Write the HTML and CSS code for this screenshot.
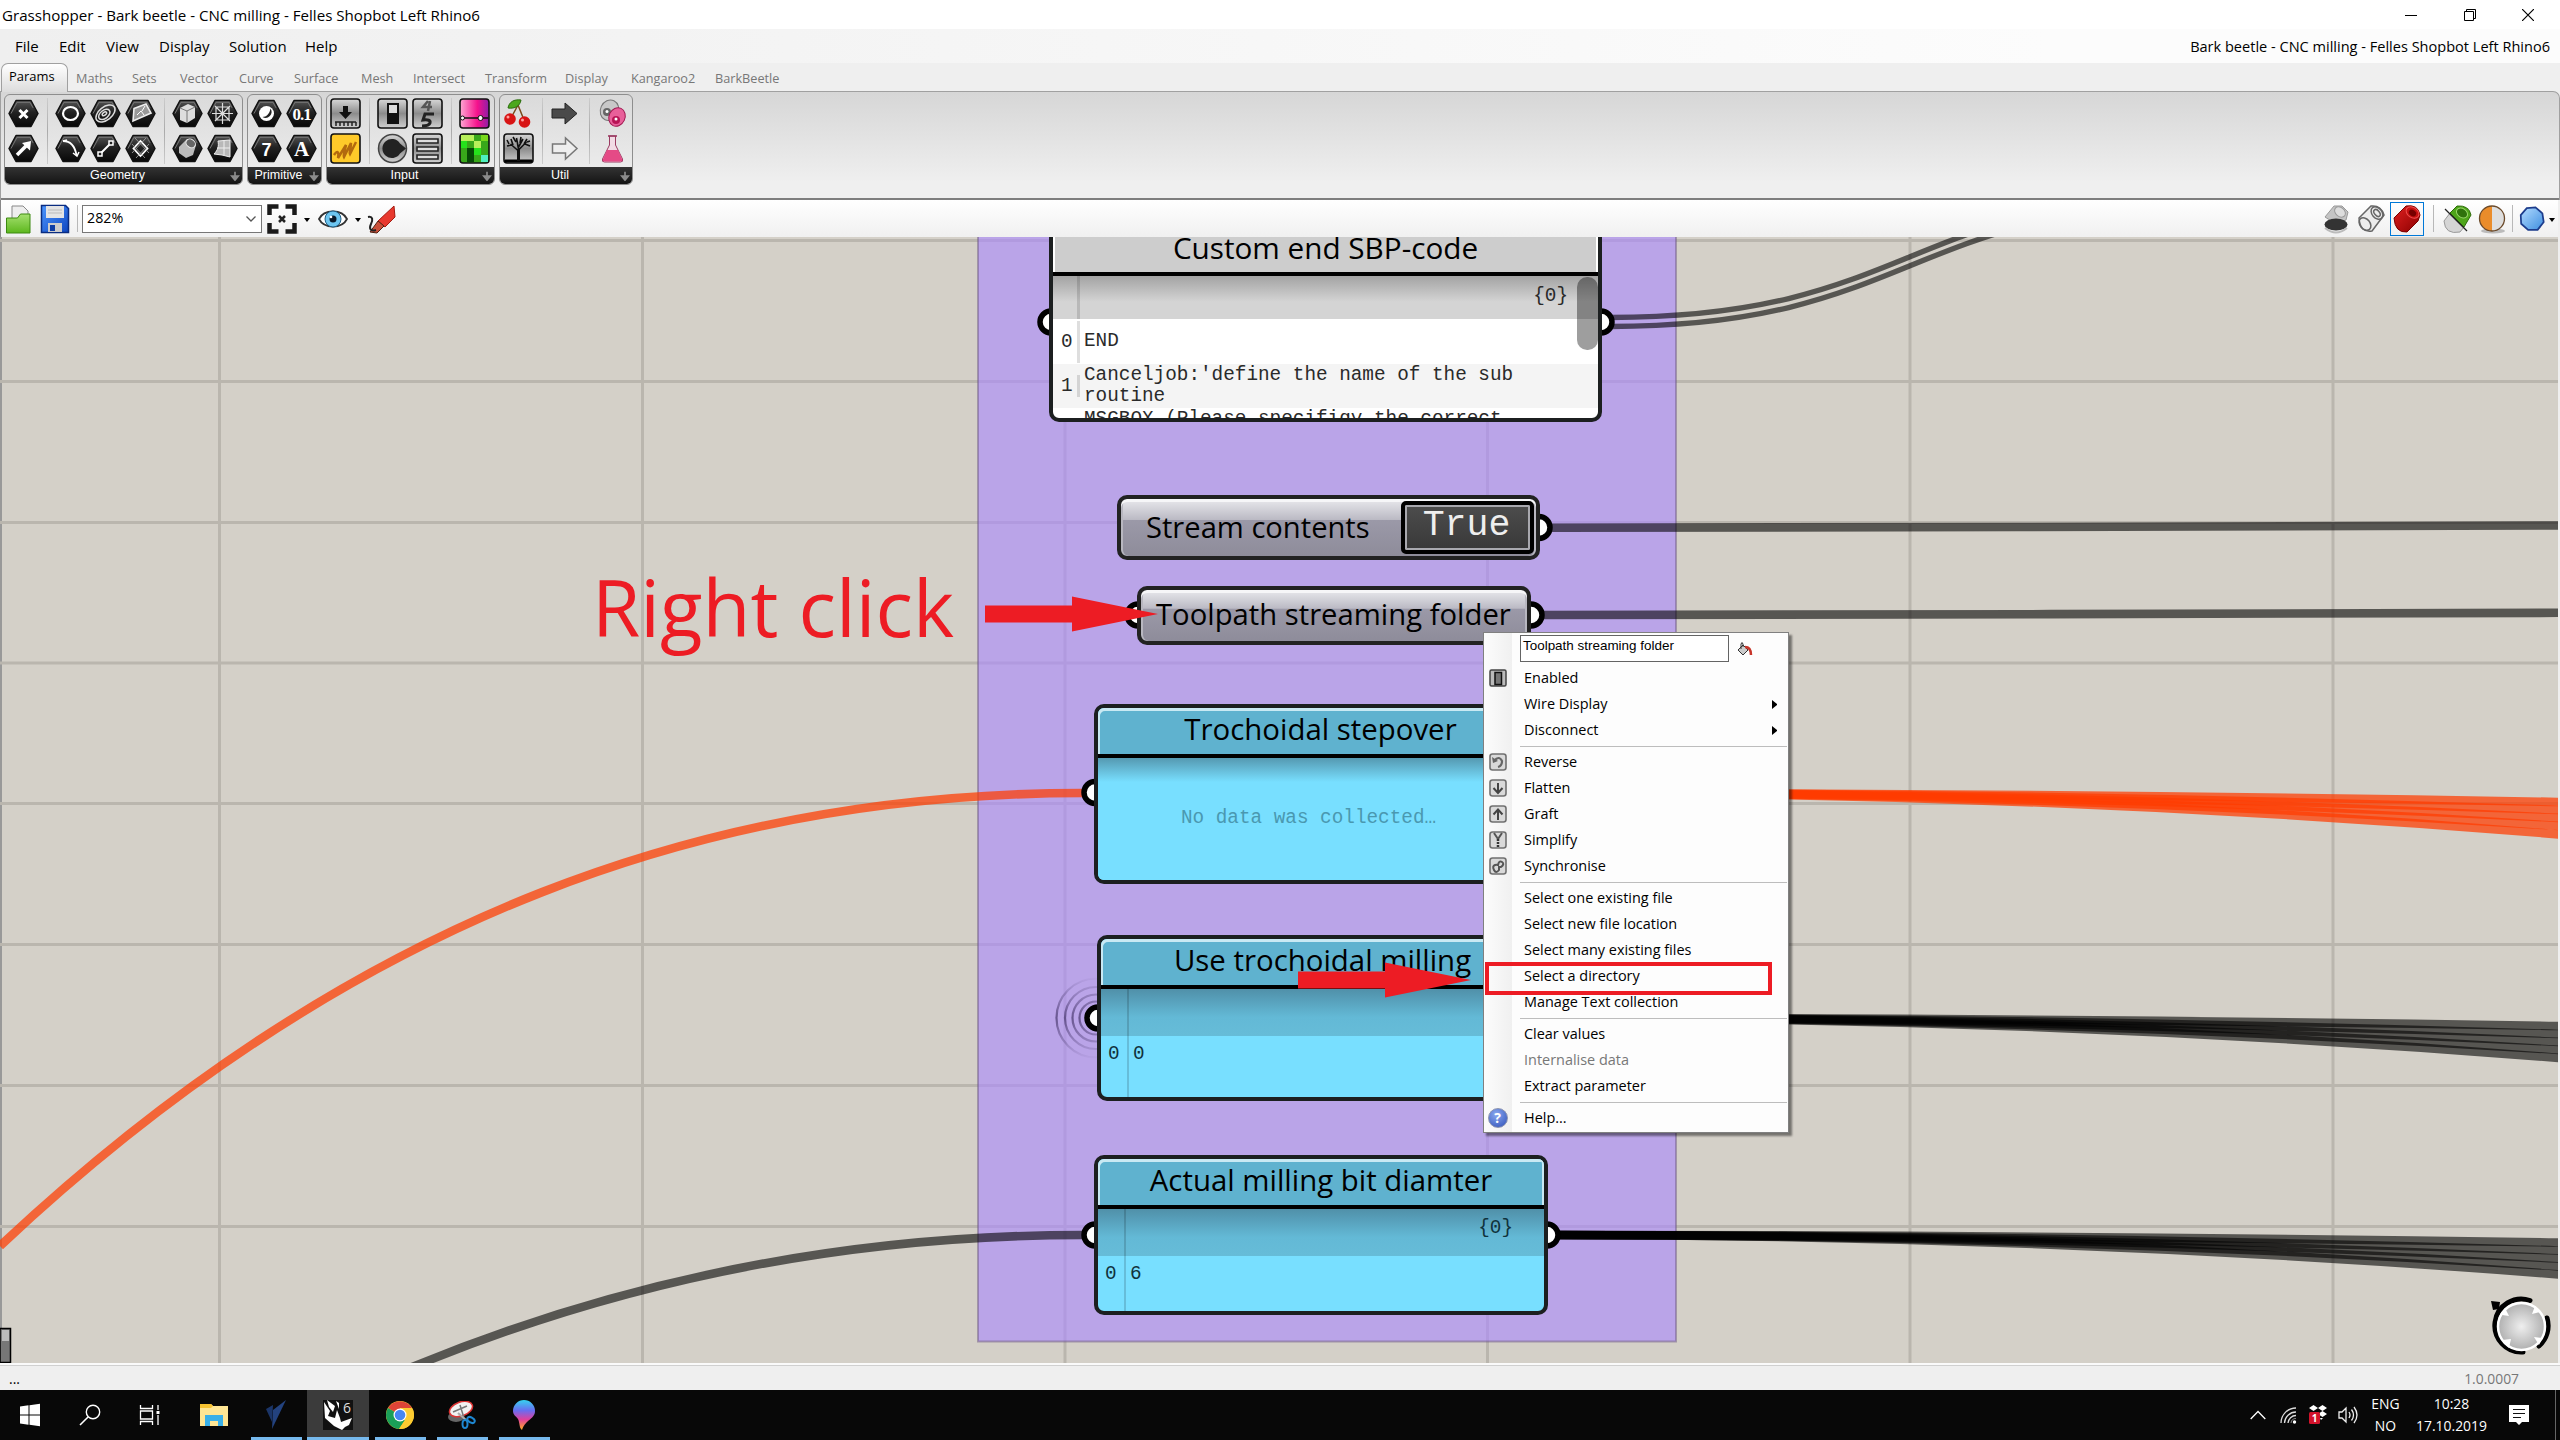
FILE: index.html
```html
<!DOCTYPE html>
<html lang="en">
<head>
<meta charset="utf-8">
<title>Grasshopper - Bark beetle - CNC milling</title>
<link rel="stylesheet" href="styles.css">
</head>
<body>
<svg class="defs" width="0" height="0" aria-hidden="true">
  <defs>
    <linearGradient id="gDark" x1="0" y1="0" x2="0" y2="1"><stop offset="0" stop-color="#555"/><stop offset=".45" stop-color="#222"/><stop offset="1" stop-color="#080808"/></linearGradient>
    <linearGradient id="gGrey" x1="0" y1="0" x2="0" y2="1"><stop offset="0" stop-color="#d8d8d8"/><stop offset=".5" stop-color="#8c8c8c"/><stop offset="1" stop-color="#d0d0d0"/></linearGradient>
    <linearGradient id="gPink" x1="0" y1="0" x2="1" y2="0"><stop offset="0" stop-color="#ffa9d4"/><stop offset=".6" stop-color="#f5128c"/><stop offset="1" stop-color="#8d1ea8"/></linearGradient>
    <linearGradient id="gBlue" x1="0" y1="0" x2="1" y2="1"><stop offset="0" stop-color="#4d97ff"/><stop offset="1" stop-color="#0d45c0"/></linearGradient>
    <linearGradient id="gGreen" x1="0" y1="0" x2="0" y2="1"><stop offset="0" stop-color="#a5e070"/><stop offset="1" stop-color="#5db71d"/></linearGradient>
    <linearGradient id="gRed" x1="0" y1="0" x2="1" y2="1"><stop offset="0" stop-color="#e02020"/><stop offset="1" stop-color="#8a0000"/></linearGradient>
    <linearGradient id="gSky" x1="0" y1="0" x2="1" y2="1"><stop offset="0" stop-color="#b5dcff"/><stop offset="1" stop-color="#3d8ee0"/></linearGradient>
    <linearGradient id="gPaint" x1="0" y1="0" x2="0" y2="1"><stop offset="0" stop-color="#35d3f0"/><stop offset=".35" stop-color="#6a6cf0"/><stop offset=".65" stop-color="#e0409c"/><stop offset="1" stop-color="#ffb020"/></linearGradient>
    <linearGradient id="gRipple" gradientUnits="userSpaceOnUse" x1="0" y1="976" x2="0" y2="1060"><stop offset="0" stop-color="#3c2c60" stop-opacity="0"/><stop offset=".5" stop-color="#3c2c60" stop-opacity=".65"/><stop offset="1" stop-color="#3c2c60" stop-opacity="0"/></linearGradient>
    <radialGradient id="gBall"><stop offset="0" stop-color="#efefef"/><stop offset="1" stop-color="#b0b0b0"/></radialGradient>
    <symbol id="hex" viewBox="0 0 31 31"><polygon points="1,15.5 8,2.5 23,2.5 30,15.5 23,28.5 8,28.5" fill="url(#gDark)" stroke="#111" stroke-width="1.5" stroke-linejoin="round"/><path d="M3 15.5 9 4.300h13l3 5.500" fill="none" stroke="#777" stroke-width="1"/></symbol>
    <symbol id="sq" viewBox="0 0 31 31"><rect x="1" y="1" width="29" height="29" rx="3" fill="url(#gGrey)" stroke="#111" stroke-width="1.6"/></symbol>
    <symbol id="mini" viewBox="0 0 18 18"><rect x="1" y="1" width="16" height="16" rx="2.500" fill="#d9d9d9" stroke="#707070" stroke-width="1.600"/></symbol>
    <symbol id="down" viewBox="0 0 10 12"><path d="M5 1v6M1 6l4 5 4-5z" stroke="#8c8c8c" stroke-width="2" fill="#8c8c8c"/></symbol>
  </defs>
</svg>

<header class="titlebar">
  <span class="title">Grasshopper - Bark beetle - CNC milling - Felles Shopbot Left Rhino6</span>
  <div class="winbtns">
    <svg viewBox="0 0 12 12" width="12" height="12"><path d="M0 6.500h12" stroke="#000"/></svg>
    <svg viewBox="0 0 12 12" width="12" height="12"><path d="M.5 2.500h9v9h-9zM2.500 2.500v-2h9v9h-2" stroke="#000" fill="none"/></svg>
    <svg viewBox="0 0 12 12" width="12" height="12"><path d="M0 0l12 12M12 0 0 12" stroke="#000" stroke-width="1.200"/></svg>
  </div>
</header>

<nav class="menubar">
  <div class="menus"><span>File</span><span>Edit</span><span>View</span><span>Display</span><span>Solution</span><span>Help</span></div>
  <span class="docname">Bark beetle - CNC milling - Felles Shopbot Left Rhino6</span>
</nav>

<div class="tabs">
  <span class="tab-active">Params</span>
  <div class="tablist"><span>Maths</span><span>Sets</span><span>Vector</span><span>Curve</span><span>Surface</span><span>Mesh</span><span>Intersect</span><span>Transform</span><span>Display</span><span>Kangaroo2</span><span>BarkBeetle</span></div>
</div>

<section class="ribbon">
  <div class="group">
    <div class="icons">
      <div class="cells c1">
        <svg viewBox="0 0 31 31"><use href="#hex"/><path d="M11.500 12l8 8M19.500 12l-8 8" stroke="#fff" stroke-width="3"/></svg>
        <svg viewBox="0 0 31 31"><use href="#hex"/><path d="M9 22l9-9" stroke="#fff" stroke-width="3.500"/><path d="M14 10l9-2-1 9.500z" fill="#fff"/></svg>
      </div><i class="sep"></i>
      <div class="cells c3">
        <svg viewBox="0 0 31 31"><use href="#hex"/><ellipse cx="15.500" cy="15.500" rx="7.500" ry="6.500" fill="none" stroke="#fff" stroke-width="2.200"/></svg>
        <svg viewBox="0 0 31 31"><use href="#hex"/><g fill="none" stroke="#ddd" stroke-width="1.500" transform="rotate(-38 15.500 15.500)"><ellipse cx="15.500" cy="15.500" rx="11" ry="6.500"/><ellipse cx="14" cy="15.500" rx="6.500" ry="4"/><ellipse cx="14.500" cy="15" rx="2.500" ry="1.500"/></g></svg>
        <svg viewBox="0 0 31 31"><use href="#hex"/><path d="M9 10.500l12-4.500 5 9-18 8z" fill="#999" stroke="#eee" stroke-width="1.600"/><path d="M12 17l4-4 3 4M20 8l-3 5" stroke="#fff" fill="none"/></svg>
        <svg viewBox="0 0 31 31"><use href="#hex"/><path d="M8 8c8 0 12 6 13.500 14" stroke="#fff" stroke-width="1.800" fill="none"/><path d="M8 8l4-1M18 20l4 3 2-4" stroke="#fff" stroke-width="1.500" fill="none"/></svg>
        <svg viewBox="0 0 31 31"><use href="#hex"/><path d="M10.500 20.500l10-10" stroke="#fff" stroke-width="2"/><path d="M8 19h4v4h-4zM19 8h4v4h-4z" fill="#222" stroke="#fff" stroke-width="1.500"/></svg>
        <svg viewBox="0 0 31 31"><use href="#hex"/><path d="M15.500 8l7 7.500-7 7.500L8.500 15.500z" fill="none" stroke="#fff" stroke-width="1.800"/><path d="M10 5l14 15M21 5 7 20M7 11l13 14M24 11 11 25" stroke="#aaa" stroke-width=".8"/></svg>
      </div><i class="sep"></i>
      <div class="cells c2">
        <svg viewBox="0 0 31 31"><use href="#hex"/><path d="M8 10l8-4 7 3v11l-8 5-7-3z" fill="#ddd"/><path d="M8 10l7 3v12M15 13l8-4" stroke="#777" fill="none"/></svg>
        <svg viewBox="0 0 31 31"><use href="#hex"/><g stroke="#ddd" stroke-width="1.200" fill="none"><path d="M9 9h13v13h-13zM15.500 5v21M5 15.500h21M8 8l15 15M23 8 8 23"/></g></svg>
        <svg viewBox="0 0 31 31"><use href="#hex"/><path d="M7 14l8-8 9 6-3 10-7 3-7-5z" fill="#bbb"/><ellipse cx="19" cy="10.500" rx="5" ry="4" transform="rotate(35 19 10)" fill="#666" stroke="#eee"/></svg>
        <svg viewBox="0 0 31 31"><use href="#hex"/><path d="M11 8l12-1v17l-8-2-8-1c4-4 5-8 4-13z" fill="#b8b8b8" stroke="#eee"/><path d="M17 8v14M10 15h13" stroke="#eee"/></svg>
      </div>
    </div>
    <div class="glabel"><span>Geometry</span><svg width="10" height="12"><use href="#down"/></svg></div>
  </div>
  <div class="group">
    <div class="icons"><div class="cells c2">
      <svg viewBox="0 0 31 31"><use href="#hex"/><circle cx="15.500" cy="15.500" r="7.500" fill="#fff"/><path d="M19.500 10.500a6 6 0 0 1-8 8.500c4 0 7-3 8-8.500z" fill="#222"/></svg>
      <svg viewBox="0 0 31 31"><use href="#hex"/><text x="15.500" y="22" class="glyph g01">0.1</text></svg>
      <svg viewBox="0 0 31 31"><use href="#hex"/><text x="15.500" y="23" class="glyph g7">7</text></svg>
      <svg viewBox="0 0 31 31"><use href="#hex"/><text x="15.500" y="23" class="glyph gA">A</text></svg>
    </div></div>
    <div class="glabel"><span>Primitive</span><svg width="10" height="12"><use href="#down"/></svg></div>
  </div>
  <div class="group">
    <div class="icons">
      <div class="cells c1">
        <svg viewBox="0 0 31 31"><use href="#sq"/><path d="M13 8h5v6h4l-6.500 7-6.500-7h4z" fill="#111"/><path d="M5 24h21M6 24v4M10 24v4M14 24v4M18 24v4M22 24v4M26 24v4" stroke="#222" stroke-width="1.500"/></svg>
        <svg viewBox="0 0 31 31"><rect x="1" y="1" width="29" height="29" rx="3" fill="#ffca2a" stroke="#111" stroke-width="1.600"/><path d="M4 22c4-6 5-2 4 3l8-13c-1 5-3 10-2 12l7-14c0 5-2 9-1 11l6-12" fill="none" stroke="#b36a0e" stroke-width="2.500"/></svg>
      </div><i class="sep"></i>
      <div class="cells c2">
        <svg viewBox="0 0 31 31"><use href="#sq"/><rect x="10" y="5" width="12" height="21" fill="#111"/><rect x="12" y="7" width="8" height="8" fill="#ddd"/></svg>
        <svg viewBox="0 0 31 31"><use href="#sq"/><path d="M16 3l-5 6h9M18 3l-2 10" fill="none" stroke="#555" stroke-width="2.500"/><path d="M22 16h-9l-2 6q8-1 7 3-1 3-8 3" fill="none" stroke="#222" stroke-width="3"/></svg>
        <svg viewBox="0 0 31 31"><circle cx="15.500" cy="15.500" r="14" fill="url(#gGrey)" stroke="#444" stroke-width="1.500"/><path d="M29 15.500l-6 5a9.500 9.500 0 1 1 0-10z" fill="#222"/></svg>
        <svg viewBox="0 0 31 31"><use href="#sq"/><path d="M5 6h21v4h-21zM5 14h21v4h-21zM5 22h21v4h-21z" fill="#ddd" stroke="#222" stroke-width="1.600"/></svg>
      </div><i class="sep"></i>
      <div class="cells c1">
        <svg viewBox="0 0 31 31"><rect x="1" y="1" width="29" height="29" rx="3" fill="url(#gPink)" stroke="#111" stroke-width="1.600"/><path d="M2 20h27" stroke="#111" stroke-width="1.500"/><circle cx="3.500" cy="20" r="2" fill="#fff" stroke="#111"/><circle cx="21.500" cy="20" r="2.500" fill="#fff" stroke="#111"/></svg>
        <svg viewBox="0 0 31 31"><rect x="1" y="1" width="29" height="29" rx="3" fill="#38a81a" stroke="#111" stroke-width="1.600"/><path d="M2 2h6v6h-6zM15 8h7v7h-7zM8 2h7v6h-7z" fill="#b7f05a"/><path d="M8 15h7v7h-7zM8 22h7v7h-7z" fill="#064b05"/><path d="M15 15h7v7h-7zM2 8h6v7h-6z" fill="#25e21b"/><path d="M22 22h7v7h-7z" fill="#4ff0c0"/><path d="M22 2h7v6h-7z" fill="#78d81c"/></svg>
      </div>
    </div>
    <div class="glabel"><span>Input</span><svg width="10" height="12"><use href="#down"/></svg></div>
  </div>
  <div class="group">
    <div class="icons">
      <div class="cells c1">
        <svg viewBox="0 0 31 31"><path d="M15 7l-7 13M15 7l6 15" stroke="#7a4a1a" stroke-width="1.500" fill="none"/><path d="M5 10c1-6 6-9 13-8-1 6-6 9-13 8z" fill="#4ca81d" stroke="#2b6d0e"/><circle cx="7" cy="21" r="5.800" fill="#d81414"/><circle cx="21.500" cy="24" r="5.800" fill="#d81414"/><circle cx="5" cy="19" r="1.500" fill="#ff9d9d"/><circle cx="19.500" cy="22" r="1.500" fill="#ff9d9d"/></svg>
        <svg viewBox="0 0 31 31"><use href="#sq"/><path d="M2 27h27v2h-27z" fill="#000" stroke="#000"/><path d="M15.500 28v-12" stroke="#111" stroke-width="3"/><path d="M15.500 18l-8-7M15.500 17l8-8M15.500 16l-2-11M15 15l5-9M9 12l-5 1M22 11l5 2M10 12l-2-6M21 11l3-5M13 9l-3-5M17 10l1-6M6 11l-2-4M24 9l3-1" stroke="#111" stroke-width="1.600"/></svg>
      </div><i class="sep"></i>
      <div class="cells c1">
        <svg viewBox="0 0 31 31"><path d="M2 11h13v-6l12 10.500-12 10.500v-6h-13z" fill="#4a4a4a" stroke="#222"/></svg>
        <svg viewBox="0 0 31 31"><path d="M2.500 11h13v-6l11.500 10.500-11.500 10.500v-6h-13z" fill="#eee" stroke="#777" stroke-width="1.500"/></svg>
      </div><i class="sep"></i>
      <div class="cells c1">
        <svg viewBox="0 0 31 31"><ellipse cx="12.500" cy="12" rx="9" ry="10.500" transform="rotate(25 12 12)" fill="#c8c8c8" stroke="#777"/><circle cx="10" cy="14" r="4" fill="#666"/><ellipse cx="20" cy="19" rx="8" ry="9.500" transform="rotate(25 20 19)" fill="#e8609a" stroke="#a01850"/><circle cx="19" cy="22" r="4" fill="#b81456"/><circle cx="10" cy="13.500" r="1.500" fill="#fff"/><circle cx="19" cy="21" r="1.500" fill="#fff"/></svg>
        <svg viewBox="0 0 31 31"><path d="M12.500 3v9l-7 14q-1 3 2 3h16q3 0 2-3l-7-14v-9z" fill="#f1dbe4" stroke="#9a3b62"/><path d="M10 17h11l4 9q1 2.500-1.500 2.500h-16q-2.500 0-1.500-2.500z" fill="#e54a86"/><path d="M11 3h9" stroke="#9a3b62" stroke-width="1.600"/></svg>
      </div>
    </div>
    <div class="glabel"><span>Util</span><svg width="10" height="12"><use href="#down"/></svg></div>
  </div>
</section>

<div class="toolbar">
  <svg class="t-open" viewBox="0 0 28 30" width="28" height="30"><path d="M7 2h11l5 5v12h-16z" fill="#eee" stroke="#888"/><path d="M1.500 14h11l3-4h9.500v19h-23.500z" fill="url(#gGreen)" stroke="#3c8a10"/></svg>
  <svg class="t-save" viewBox="0 0 30 30" width="30" height="30"><path d="M1.500 1.500h24l3 3v24h-27z" fill="url(#gBlue)" stroke="#0a2c80" stroke-width="1.500"/><path d="M6 2h18v12h-18z" fill="#e4e4e4"/><path d="M8 6h14M8 9h14" stroke="#bbb"/><path d="M8 19h14v9h-14z" fill="#ccc"/><path d="M10 21h5v6h-5z" fill="#0d3ca5"/></svg>
  <i class="tsep"></i>
  <div class="combo"><span>282%</span><svg viewBox="0 0 12 8" width="12" height="8"><path d="M1.500 1.500 6 6l4.500-4.500" fill="none" stroke="#555" stroke-width="1.300"/></svg></div>
  <svg class="t-frame" viewBox="0 0 30 30" width="30" height="30"><path d="M2.500 11v-8.500h9M18.500 2.500h9v8.500M27.500 19v8.500h-9M11.500 27.500h-9v-8.500" fill="none" stroke="#1a1a1a" stroke-width="4.500"/><path d="M12 12l6 6M18 12l-6 6" stroke="#222" stroke-width="2.500"/></svg>
  <i class="caret"></i>
  <svg class="t-eye" viewBox="0 0 30 30" width="30" height="30"><path d="M1 15c5-10 23-10 28 0-5 10-23 10-28 0z" fill="#fff" stroke="#333" stroke-width="1.800"/><circle cx="15" cy="15" r="8" fill="#6cc5f0" stroke="#1f5e85"/><circle cx="15" cy="15" r="3.500" fill="#0a1a2a"/><circle cx="13" cy="13" r="1.300" fill="#fff"/></svg>
  <i class="caret"></i>
  <svg class="t-brush" viewBox="0 0 30 30" width="30" height="30"><path d="M28 2l1 11-10 10-7-6z" fill="#e8392e" stroke="#a31b10"/><path d="M12 17l6 5-7 7-7-1z" fill="#c9503a" stroke="#502010"/><path d="M2 13c5-1 5 3 3 7s-1 8 5 6" stroke="#222" stroke-width="2" fill="none"/></svg>
  <div class="tright">
    <svg viewBox="0 0 30 30" width="30" height="30"><path d="M4 13 13 2h8l6 6-2 8-10 4z" fill="#c4c4c4" stroke="#999"/><ellipse cx="19" cy="8" rx="6" ry="4.500" transform="rotate(40 19 8)" fill="#ddd" stroke="#999"/><ellipse cx="15" cy="20.500" rx="11.500" ry="6" fill="#333"/><path d="M4 24q11 9 22 0" stroke="#bbb" fill="none" stroke-width="2"/></svg>
    <svg viewBox="0 0 30 30" width="30" height="30"><g fill="none" stroke="#666" stroke-width="1.500"><path d="M3 14 15 2q10-1 13 9L16 27q-12 2-13-13z" fill="#ececec"/><ellipse cx="21" cy="9" rx="7" ry="5" transform="rotate(50 21 9)"/><ellipse cx="21" cy="9" rx="4" ry="2.500" transform="rotate(50 21 9)"/><ellipse cx="9" cy="20" rx="7" ry="5" transform="rotate(50 9 20)"/></g></svg>
    <span class="selected"><svg viewBox="0 0 30 30" width="30" height="30"><path d="M2 14 14 2q12-2 14 9l-2 6-11 11q-12 1-13-14z" fill="url(#gRed)" stroke="#7a0000"/><ellipse cx="20.500" cy="8.500" rx="7" ry="5" transform="rotate(35 20.500 8.500)" fill="#c61010" stroke="#f05050"/><ellipse cx="20.500" cy="9" rx="4" ry="3" transform="rotate(35 20.500 9)" fill="#700"/></svg></span>
    <i class="tsep"></i>
    <svg viewBox="0 0 30 30" width="30" height="30"><path d="M2 17l6-8 14 14-4 5q-15 3-16-11z" fill="#d5d5d5" stroke="#999"/><path d="M8 9l7-7q12-1 14 9l-7 12z" fill="#4ea51a" stroke="#2c6a08"/><ellipse cx="20" cy="9" rx="6" ry="4.500" transform="rotate(35 20 9)" fill="#2f720c" stroke="#9bd96a"/><path d="M3 5l22 22" stroke="#222" stroke-width="1.300"/></svg>
    <svg viewBox="0 0 30 30" width="30" height="30"><ellipse cx="16" cy="27" rx="12" ry="2.500" fill="#bbb"/><path d="M15 2a12.500 12.500 0 0 0 0 25z" fill="#ea8c2a"/><path d="M15 2a12.500 12.500 0 0 1 0 25z" fill="#dedede"/><circle cx="15" cy="14.500" r="12.500" fill="none" stroke="#6b4a2a" stroke-width="1.300"/></svg>
    <i class="tsep"></i>
    <svg viewBox="0 0 30 30" width="26" height="28"><path d="M9 2.500l10-1 8 7 1.500 10-7 9h-11l-8-7-.5-10z" fill="url(#gSky)" stroke="#1c3c8c" stroke-width="2"/></svg>
    <i class="caret"></i>
  </div>
</div>

<main class="canvas">
  <svg class="wires" viewBox="0 237 2558 1126" width="2558" height="1126">
    <g class="grid">
      <path d="M219.500 237V1363M642.500 237V1363M1065 237V1363M1487.500 237V1363M1910 237V1363M2333 237V1363"/>
      <path d="M0 240.500H2558M0 381.500H2558M0 522.500H2558M0 663H2558M0 803.500H2558M0 944.500H2558M0 1085.500H2558M0 1226.500H2558"/>
    </g>
    <rect x="978" y="100" width="698" height="1241.500" class="groupbox"/>
    <g class="wire thin"><path d="M1610 317.500C1912 317.500 1908 196 2210 196"/><path d="M1610 326.500C1912 326.500 1908 205 2210 205"/></g>
    <g class="wire">
      <path d="M1548 527.700C1900 528 2200 526 2560 525.500"/>
      <path d="M1540 615C1900 615 2200 613.500 2560 612.800"/>
      <path d="M1083 1235C842 1235 602 1281 361 1389"/>
      <path d="M1560 1018Q2060 1018 2560 1026"/><path d="M1560 1018Q2060 1018 2560 1034"/><path d="M1560 1018Q2060 1018 2560 1042"/><path d="M1560 1018Q2060 1018 2560 1050"/><path d="M1560 1018Q2060 1018 2560 1058"/>
      <path d="M1555 1235Q2057 1235 2560 1242.500"/><path d="M1555 1235Q2057 1235 2560 1250.500"/><path d="M1555 1235Q2057 1235 2560 1258.500"/><path d="M1555 1235Q2057 1235 2560 1266.500"/><path d="M1555 1235Q2057 1235 2560 1274.500"/>
    </g>
    <g class="wire hot">
      <path d="M1083 793C722 793 361 907 0 1246"/>
      <path d="M1560 793Q2060 793 2560 802"/><path d="M1560 793Q2060 793 2560 810"/><path d="M1560 793Q2060 793 2560 818"/><path d="M1560 793Q2060 793 2560 826"/><path d="M1560 793Q2060 793 2560 834.500"/>
    </g>
    <g class="ripple">
      <circle cx="1096" cy="1018" r="39.500"/><circle cx="1096" cy="1018" r="31"/><circle cx="1096" cy="1018" r="23.500"/><circle cx="1096" cy="1018" r="16.500"/>
    </g>
    <g class="grips">
      <circle cx="1051" cy="322" r="11"/><circle cx="1601" cy="322" r="11"/><circle cx="1539" cy="527.500" r="11"/>
      <circle cx="1138" cy="615" r="11"/><circle cx="1531" cy="615" r="11"/><circle cx="1095" cy="792.500" r="11"/>
      <circle cx="1098" cy="1018" r="11"/><circle cx="1095" cy="1235" r="11"/><circle cx="1547" cy="1235" r="11"/>
    </g>
    <g>
      <rect x="0" y="1328.500" width="10.500" height="34" fill="#777" stroke="#000" stroke-width="1.500"/><rect x="2" y="1330" width="7" height="11" fill="#bbb"/>
    </g>
    <g>
      <path d="M2530 1300.500A26.500 26.500 0 1 0 2523 1352M2547 1318A27 27 0 0 1 2539 1346" fill="none" stroke="#000" stroke-width="5" stroke-linecap="round"/>
      <path d="M2491 1301l9 1-1 7-6 1z" fill="#000"/>
      <circle cx="2521.500" cy="1326.500" r="23.500" fill="url(#gBall)" stroke="#fff" stroke-width="2.500"/>
      <path d="M2502 1315l3-7 4 8zM2532 1314l3-8 5 6zM2502 1340l9-1-2 9zM2534 1337l8 1-3 7z" fill="#fff"/>
    </g>
  </svg>

  <div class="world">
    <article class="panel grey n-custom">
      <h2>Custom end SBP-code</h2>
      <div class="pbody">
        <div class="path"><b></b><span>{0}</span></div>
        <div class="row white"><b>0</b><span>END</span></div>
        <div class="row shade"><b>1</b><span>Canceljob:'define the name of the sub routine</span></div>
        <div class="row white last"><b></b><span>MSGBOX (Please specifiqy the correct</span></div>
      </div>
      <i class="scroll"></i>
    </article>

    <article class="capsule n-stream"><span>Stream contents</span><div class="toggle">True</div></article>
    <article class="capsule n-tool"><span>Toolpath streaming folder</span></article>

    <article class="panel cyan n-troch">
      <h2>Trochoidal stepover</h2>
      <div class="pbody empty">No data was collected…</div>
    </article>
    <article class="panel cyan n-use">
      <h2>Use trochoidal milling</h2>
      <div class="pbody"><div class="path"><b></b><span></span></div><div class="row"><b>0</b><span>0</span></div></div>
    </article>
    <article class="panel cyan n-actual">
      <h2>Actual milling bit diamter</h2>
      <div class="pbody"><div class="path"><b></b><span>{0}</span></div><div class="row"><b>0</b><span>6</span></div></div>
    </article>

    <div class="ctx">
      <div class="name"><div class="field">Toolpath streaming folder</div>
        <svg viewBox="0 0 16 16" width="16" height="16"><path d="M1 9l5-5 5 5-5 5z" fill="#ccc" stroke="#333"/><path d="M4 8V3q1-3 2 0v3" fill="none" stroke="#333"/><path d="M8 6q6 0 6 8" fill="none" stroke="#c8352a" stroke-width="2.500"/></svg></div>
      <div class="item"><i><svg viewBox="0 0 18 18"><rect x="1" y="1" width="16" height="16" rx="1.500" fill="#bbb" stroke="#444" stroke-width="1.500"/><rect x="6" y="3.500" width="6.500" height="12" fill="#777" stroke="#111" stroke-width="1.500"/></svg></i><span>Enabled</span></div>
      <div class="item"><i></i><span>Wire Display</span><u></u></div>
      <div class="item"><i></i><span>Disconnect</span><u></u></div>
      <hr>
      <div class="item"><i><svg viewBox="0 0 18 18"><use href="#mini"/><path d="M5 8q5-6 8 0 0 5-4 6" fill="none" stroke="#666" stroke-width="2.200"/><path d="M3 4l1 6 5-2z" fill="#666"/></svg></i><span>Reverse</span></div>
      <div class="item"><i><svg viewBox="0 0 18 18"><use href="#mini"/><path d="M9 4v9M4.500 9l4.500 5 4.500-5" fill="none" stroke="#444" stroke-width="2"/></svg></i><span>Flatten</span></div>
      <div class="item"><i><svg viewBox="0 0 18 18"><use href="#mini"/><path d="M9 15V5M4.500 9.500 9 4.500l4.500 5" fill="none" stroke="#444" stroke-width="2"/></svg></i><span>Graft</span></div>
      <div class="item"><i><svg viewBox="0 0 18 18"><use href="#mini"/><path d="M5 2l4 6 4-6" fill="none" stroke="#555" stroke-width="2"/><path d="M9 8v8" stroke="#333" stroke-width="2.500" stroke-dasharray="2 1"/></svg></i><span>Simplify</span></div>
      <div class="item"><i><svg viewBox="0 0 18 18"><use href="#mini"/><path d="M9 8q1-5 4-3t-1 5h-3M9 9q0-2-3-1t-1 5 5 0v-4" fill="none" stroke="#555" stroke-width="2"/></svg></i><span>Synchronise</span></div>
      <hr>
      <div class="item"><i></i><span>Select one existing file</span></div>
      <div class="item"><i></i><span>Select new file location</span></div>
      <div class="item"><i></i><span>Select many existing files</span></div>
      <div class="item"><i></i><span>Select a directory</span></div>
      <div class="item"><i></i><span>Manage Text collection</span></div>
      <hr>
      <div class="item"><i></i><span>Clear values</span></div>
      <div class="item off"><i></i><span>Internalise data</span></div>
      <div class="item"><i></i><span>Extract parameter</span></div>
      <hr>
      <div class="item"><i><b class="help">?</b></i><span>Help...</span></div>
    </div>

    <div class="rightclick">Right click</div>
    <svg class="arrow a1" viewBox="0 0 173 36" width="173" height="36"><path d="M0 9.500h87V.5l86 17.500-86 17.500v-9H0z" fill="#ed1c24"/></svg>
    <svg class="arrow a2" viewBox="0 0 173 36" width="173" height="36"><path d="M0 9.500h87V.5l86 17.500-86 17.500v-9H0z" fill="#ed1c24"/></svg>
    <div class="redbox"></div>
  </div>
</main>

<footer class="status"><span>...</span><span class="ver">1.0.0007</span></footer>

<div class="taskbar">
  <span class="tk s"><svg viewBox="0 0 20 24" width="20" height="24"><path d="M0 3.500l8.500-1.200v9.200H0zM9.500 2.200 20 .8v10.700H9.500zM0 12.500h8.500v9.200L0 20.500zM9.500 12.500H20v10.700L9.500 21.800z" fill="#fff"/></svg></span>
  <span class="tk s"><svg viewBox="0 0 22 22" width="22" height="22"><circle cx="14" cy="8" r="6.700" fill="none" stroke="#fff" stroke-width="1.400"/><path d="M9.300 12.700 1 21" stroke="#fff" stroke-width="1.600"/></svg></span>
  <span class="tk s last"><svg viewBox="0 0 22 20" width="22" height="20"><path d="M1.500 0v3.500h12V0M1.500 6h12v8h-12zM1.500 20v-3.500h12V20M19 0v5M19 10v10" fill="none" stroke="#fff" stroke-width="1.300"/><path d="M17.500 6h3v3h-3z" fill="#fff"/></svg></span>
  <span class="tk"><svg viewBox="0 0 28 24" width="28" height="24"><path d="M0 1h11l2 2h15v20H0z" fill="#ffe694"/><path d="M0 1h11l2 2-2 2H0z" fill="#f7c331"/><path d="M5 23v-11h18v11h-5v-5h-8v5z" fill="#3ab0e8"/></svg></span>
  <span class="tk run"><svg viewBox="0 0 22 30" width="22" height="30"><path d="M21 0 7 29l1-19z" fill="#23427e"/><path d="M1 9l7-4-1 17z" fill="#1b3568"/></svg></span>
  <span class="tk run active"><svg viewBox="0 0 30 30" width="30" height="30"><rect width="30" height="30" fill="#111"/><path d="M1 2l6 9-2 5 7 2 2-8 3 8 1 4 11-4-3 7-4 2-3 3-8-4-9-8z" fill="#fff"/><path d="M4 0l8 6-2 6-4-5zM13 1l3 2v6z" fill="#fff"/><text x="24" y="13" class="six">6</text></svg></span>
  <span class="tk run"><svg viewBox="0 0 28 28" width="28" height="28"><circle cx="14" cy="14" r="14" fill="#fccb31"/><path d="M14 14 2 7a14 14 0 0 1 24 0z" fill="#dd4437"/><path d="M14 14 1.900 7A14 14 0 0 0 13 28l6-9z" fill="#1a9f58"/><path d="M26 7H14v7l5 5-6 9A14 14 0 0 0 26 7z" fill="#fccb31"/><circle cx="14" cy="14" r="6.500" fill="#fff"/><circle cx="14" cy="14" r="5.300" fill="#4686f3"/></svg></span>
  <span class="tk run"><svg viewBox="0 0 28 28" width="28" height="28"><ellipse cx="8" cy="16" rx="8" ry="5" fill="#666"/><ellipse cx="13" cy="8" rx="12" ry="7" transform="rotate(-20 13 8)" fill="#f2f2f2" stroke="#d33" stroke-width="1.500"/><path d="M12 4l4 13M5 11l14-6" stroke="#777" stroke-width="1.500"/><path d="M10 12l8 7" stroke="#aaa" stroke-width="2"/><ellipse cx="17" cy="23" rx="2.500" ry="4" fill="none" stroke="#1e86d0" stroke-width="2"/><ellipse cx="23" cy="19" rx="4" ry="2.500" transform="rotate(30 23 19)" fill="none" stroke="#1e86d0" stroke-width="2"/></svg></span>
  <span class="tk run"><svg viewBox="0 0 24 30" width="24" height="30"><path d="M12 0a11 11 0 0 1 11 11c0 8-9 8-13 19-3-2-2-7-4-11C4 16 1 15 1 11A11 11 0 0 1 12 0z" fill="url(#gPaint)"/></svg></span>

  <div class="tray">
    <span class="w30"><svg viewBox="0 0 16 10" width="16" height="10"><path d="M.7 9 8 1.500 15.300 9" fill="none" stroke="#fff" stroke-width="1.300"/></svg></span>
    <span class="w30"><svg viewBox="0 0 17 17" width="17" height="17"><g fill="none" stroke="#ddd" stroke-width="1.300"><path d="M1 16A15 15 0 0 1 16 1M4.500 16A11.500 11.500 0 0 1 16 5M8 16a8 8 0 0 1 8-7.500"/></g><path d="M11 16a5 5 0 0 1 5-4.500" fill="none" stroke="#888"/><circle cx="14.500" cy="15" r="1.700" fill="#fff"/></svg></span>
    <span class="w29"><svg viewBox="0 0 20 20" width="20" height="20"><path d="M5.500 0 10 3 5.500 6 1 3zM14.500 0 19 3l-4.500 3L10 3zM14.500 6 19 9l-4.500 3L10 9zM12 13l3 0-2 2z" fill="#fff"/><rect x="1" y="7" width="11" height="12" rx="1.500" fill="#d1122a"/><text x="6.500" y="17" class="one">1</text></svg></span>
    <span class="w32"><svg viewBox="0 0 20 18" width="20" height="18"><g fill="none" stroke="#eee" stroke-width="1.300"><path d="M1 6h3l4-4v14l-4-4H1zM11 6q2 3 0 6M13.500 3.500q4 5.500 0 11M16 1q6 8 0 16"/></g></svg></span>
    <span class="two lang">ENG<br>NO</span>
    <span class="two clock">10:28<br>17.10.2019</span>
    <span class="notif"><svg viewBox="0 0 20 20" width="20" height="20"><path d="M0 0h20v17h-7l-3 3-3-3H0z" fill="#fff"/><path d="M4 4.500h12M4 8.500h12M4 12.500h8" stroke="#111" stroke-width="1.200"/></svg></span>
    <i class="edge"></i>
  </div>
</div>
</body>
</html>
```
FILE: styles.css
```css
* { box-sizing: border-box; }
body {
  margin: 0;
  width: 2560px;
  height: 1440px;
  overflow: hidden;
  display: flex;
  flex-direction: column;
  background: #efefef;
  color: #000;
  font-family: "Open Sans", "Noto Sans", sans-serif;
  white-space: nowrap;
}
svg { display: block; flex: none; }
.defs { position: absolute; }
i, b, u { font-style: normal; font-weight: normal; text-decoration: none; }

/* window chrome */
.titlebar { height: 29px; background: #fff; display: flex; justify-content: space-between; align-items: center; padding: 0 26px 0 2px; flex: none; }
.title { font-size: 15.12px; line-height: 27px; padding-top: 1px; }
.winbtns { display: flex; gap: 46.500px; align-items: center; }
.menubar { height: 34px; flex: none; display: flex; justify-content: space-between; padding: 0 10px 0 15px; background: linear-gradient(90deg, #efefef, #fcfcfc 80%); line-height: 34px; }
.menus { display: grid; grid-template-columns: 44px 47px 53px 70px 76px 60px; font-size: 15px; }
.docname { font-size: 14.55px; }
.tabs { height: 28px; flex: none; display: flex; font-size: 12.7px; line-height: 31px; color: #777; }
.tab-active { width: 67px; margin-left: 1px; height: 29px; border: 1px solid #a0a0a0; border-bottom: 0; border-radius: 7px 7px 0 0; background: linear-gradient(#fff, #dcdcdc); color: #000; font-size: 12.95px; line-height: 25px; padding-left: 7px; z-index: 1; }
.tablist { margin-left: 8px; display: grid; grid-template-columns: 56px 48px 59px 55px 67px 52px 72px 80px 66px 84px 70px; }

/* ribbon */
.ribbon { height: 109px; flex: none; display: flex; align-items: flex-start; gap: 4px; padding: 2px 0 0 3px; border: 1px solid #a0a0a0; border-width: 1px 1px 0; border-radius: 0 7px 0 0; background: linear-gradient(#d6d6d6, #efefef 90px); box-shadow: inset 0 -2px 0 #7d7d7d; }
.group { border: 1px solid #8e8e8e; border-radius: 6px; background: linear-gradient(#dadada, #efefef); height: 91px; display: flex; flex-direction: column; }
.icons { display: flex; padding: 0 2px 0 1px; height: 72px; }
.cells { display: grid; grid-auto-rows: 35px; }
.cells svg { width: 31px; height: 31px; margin: 2.500px 2px 1.500px; }
.c1 { grid-template-columns: 35px; }
.c2 { grid-template-columns: 35px 35px; }
.c3 { grid-template-columns: 35px 35px 35px; }
.sep { width: 1px; margin: 3px 5px 3px 6px; background: linear-gradient(#ccc, #aaa, #ccc); }
.glabel { flex: 1; border-radius: 0 0 5px 5px; background: linear-gradient(#333, #141414); color: #fff; display: flex; align-items: center; font: 12.5px "Liberation Sans", sans-serif; padding-right: 2px; }
.glabel span { flex: 1; text-align: center; line-height: 17px; }
.glabel svg { height: 10px; }
.glyph { font-family: "Liberation Serif", serif; font-weight: bold; fill: #fff; text-anchor: middle; }
.g01 { font-size: 17px; letter-spacing: -1px; }
.g7 { font: bold 18px "Liberation Sans", sans-serif; }
.gA { font-size: 21px; }

/* toolbar */
.toolbar { height: 37px; flex: none; width: 2558px; border-left: 1px solid #888; background: linear-gradient(#fff, #f0f0f0); display: flex; align-items: center; }
.t-open { margin-left: 4px; }
.t-save { margin-left: 7px; }
.tsep { width: 1px; height: 27px; background: #b8b8b8; }
.toolbar > .tsep { margin-left: 7px; }
.combo { margin-left: 4px; width: 180px; height: 28px; border: 1px solid #777; background: #fff; display: flex; align-items: center; justify-content: space-between; padding: 0 4px 0 4px; font-size: 14.25px; line-height: 24px; }
.combo span { margin-top: -2px; }
.t-frame { margin-left: 5px; }
.caret { border: 3.500px solid transparent; border-top: 4px solid #000; border-bottom: 0; margin-top: 2px; }
.t-frame + .caret { margin-left: 7px; }
.t-eye { margin-left: 8px; }
.t-eye + .caret { margin-left: 7px; }
.t-brush { margin-left: 5px; }
.tright { margin-left: auto; display: flex; align-items: center; padding-right: 3px; }
.tright svg:nth-child(2) { margin-left: 5px; }
.selected { width: 34px; height: 34px; margin-left: 4px; border: 1px solid #0078d7; display: flex; align-items: center; justify-content: center; }
.tright .tsep { margin: 0 8px 0 9px; }
.tright .tsep ~ svg { margin: 0; }
.tright .tsep ~ svg + svg { margin-left: 5px; }
.tright .tsep ~ svg + .tsep { margin: 0 6px 0 5px; }
.tright .caret { margin-left: 4px; }

/* canvas */
.canvas { position: relative; height: 1126px; width: 2558px; flex: none; overflow: hidden; background: #d4d0c8; box-shadow: inset 2px 0 0 #999; }
.wires { position: absolute; left: 0; top: 0; }
.grid { stroke: #bab6ae; stroke-width: 3; fill: none; }
.groupbox { fill: rgba(172, 140, 249, .65); stroke: rgba(110, 90, 130, .5); stroke-width: 2; }
.wire { fill: none; stroke: rgba(0, 0, 0, .59); stroke-width: 8.600px; }
.wire.thin { stroke-width: 5.400px; }
.wire.hot { stroke: rgba(255, 60, 0, .72); }
.ripple { fill: none; stroke: url(#gRipple); stroke-width: 2.200px; }
.grips { fill: #fff; stroke: #000; stroke-width: 5.500px; }
.world { position: absolute; left: 0; top: -237px; width: 2558px; height: 1363px; }

.panel { position: absolute; border: 4px solid #1c1f20; border-radius: 10px; overflow: hidden; display: flex; flex-direction: column; }
.panel h2 { margin: 0; font-weight: normal; font-size: 29.4px; line-height: 42px; text-align: center; border-bottom: 4px solid #000; height: 50px; flex: none; }
.cyan { background: #78dfff; }
.cyan h2 { background: #5fb2cf; box-shadow: inset 2px 3px 0 #c9e9f3, inset -2px 0 0 #c9e9f3; border-radius: 5px 5px 0 0; }
.pbody { flex: 1; display: flex; flex-direction: column; font: 19.33px "Liberation Mono", monospace; color: #2a2a2a; }
.path { display: flex; flex: none; }
.path span { flex: 1; text-align: right; }
.cyan .pbody { color: #10323c; }
.cyan .path { height: 47px; background: linear-gradient(#5090a9, #63b9d6 60%, #66bcd8); line-height: 38px; padding-right: 31px; }
.cyan .pbody b { width: 28px; padding-left: 7px; border-right: 2px solid rgba(0, 0, 0, .15); }
.cyan .row { flex: 1; display: flex; line-height: 36px; }
.cyan .row span { padding-left: 4px; }
.cyan .empty { color: #4a98b0; align-items: center; line-height: 120px; padding-right: 24px; background: linear-gradient(#5599b1, #78dfff 24px); }

.n-custom { left: 1049px; top: 200px; width: 553px; height: 222px; background: #fff; }
.grey h2 { height: 72px; padding-top: 23px; background: #cdcdcd; font-size: 29.7px; line-height: 42px; box-shadow: inset 2px 0 0 #fff, inset -2px 0 0 #fff; }
.grey b { width: 27px; padding-left: 8px; border-right: 3px solid rgba(0, 0, 0, .13); flex: none; }
.grey .path { height: 43px; line-height: 40px; background: linear-gradient(#a3a3a3, #d4d4d4 60%); padding-right: 30px; }
.grey .row { display: flex; flex: none; align-items: center; }
.grey .row span { width: 480px; padding-left: 4px; white-space: normal; line-height: 21.500px; }
.white { height: 45px; }
.white b, .white span { line-height: 42px; margin-top: 0; }
.shade { height: 44px; background: #f4f4f4; }
.row.last { align-items: flex-start; }
.row.last span { margin-top: 1px; }
.scroll { position: absolute; left: 524px; top: 73px; width: 21px; height: 73px; border-radius: 10px; background: rgba(0, 0, 0, .38); }

.capsule { position: absolute; border: 4px solid #222; border-radius: 10px; background: linear-gradient(#e9e9ed, #bbbac4 36%, #9b99a8 37%, #8e8c9a); box-shadow: inset 0 3px 0 #f6f6f8, inset 2px 0 0 #b8b7c0, inset -2px 0 0 #b8b7c0; font-size: 29.15px; display: flex; justify-content: space-between; }
.n-stream { left: 1117px; top: 495px; width: 423px; height: 65px; line-height: 56px; padding: 2px 2px 0 25px; }
.n-stream > span { margin-top: -2px; }
.toggle { width: 133px; height: 53px; border: 4px solid #000; border-radius: 5px; background: linear-gradient(#4d4d4d, #383838); box-shadow: inset 0 0 0 2px #a8a8ae; color: #eee; font: 36.5px/41px "Liberation Mono", monospace; text-align: center; padding-right: 2px; }
.n-tool { left: 1137px; top: 586px; width: 394px; height: 59px; line-height: 49px; padding-left: 15px; }
.n-tool span { font-size: 29.25px; }
.n-troch { left: 1094px; top: 704px; width: 453px; height: 180px; }
.n-use { left: 1097px; top: 935px; width: 451px; height: 166px; }
.n-actual { left: 1094px; top: 1155px; width: 454px; height: 160px; }

/* context menu */
.ctx { position: absolute; left: 1483px; top: 632px; width: 306px; height: 501px; border: 1px solid #808080; background: linear-gradient(90deg, #fcfcfc, #f0f0f0 28px, #fdfdfd 28px); box-shadow: 3px 3px 2px rgba(0, 0, 0, .45); font-size: 14.45px; }
.name { height: 32px; display: flex; align-items: flex-start; padding: 2px 0 0 36px; }
.field { width: 209px; height: 27px; border: 1px solid #646464; background: #fff; font: 13.45px/20px "Liberation Sans", sans-serif; padding-left: 2px; margin-right: 8px; }
.name svg { margin-top: 6px; }
.item { height: 26px; display: flex; line-height: 25px; }
.item i { width: 27px; margin-right: 13px; display: flex; align-items: center; justify-content: center; }
.item i svg { width: 18px; height: 18px; }
.item u { margin: 9px 11px 0 auto; border: 4.500px solid transparent; border-left: 5px solid #000; border-right: 0; height: 9px; }
.off { color: #777; }
.ctx hr { border: 0; margin: 0 1px 0 36px; height: 6px; background: linear-gradient(#bdbdbd, #bdbdbd) 0 3px / 100% 1px no-repeat; }
.help { width: 20px; height: 20px; border-radius: 50%; background: radial-gradient(circle at 40% 30%, #8aa9f0, #2f50b8); border: 1px solid #8b93b0; color: #fff; font-weight: bold; font-size: 14px; line-height: 18px; text-align: center; }

/* annotations */
.rightclick { position: absolute; left: 592px; top: 557px; font-size: 78.2px; line-height: 100px; color: #ed1c24; }
.arrow { position: absolute; }
.a1 { left: 985px; top: 595.500px; }
.a2 { left: 1298px; top: 962px; }
.redbox { position: absolute; left: 1485px; top: 962px; width: 287px; height: 33px; border: 4px solid #ed1c24; }

/* status and taskbar */
.status { height: 27px; flex: none; border-top: 2px solid #fafafa; box-shadow: inset 0 1px 0 #d0d0d0; display: flex; justify-content: space-between; padding: 0 41px 0 9px; font-size: 13.86px; line-height: 27px; }
.ver { color: #777; }
.taskbar { height: 50px; flex: none; background: #080808; display: flex; }
.tk { width: 62px; display: flex; align-items: center; justify-content: center; }
.tk.s { width: 60px; }
.tk.last { width: 63px; padding-right: 4px; }
.run { background: linear-gradient(#76b9ed, #76b9ed) 50% 100% / 51px 3px no-repeat; }
.run.active { background: linear-gradient(#76b9ed, #76b9ed) 50% 100% / 100% 3px no-repeat, #3b3b3b; }
.six { font: 14px "Open Sans", sans-serif; fill: #ddd; text-anchor: middle; }
.one { font: bold 10px "Open Sans", sans-serif; fill: #fff; text-anchor: middle; }
.tray { margin-left: auto; display: flex; color: #fff; padding-right: 4px; }
.tray > span { display: flex; align-items: center; justify-content: center; }
.w30 { width: 30px; }
.w29 { width: 29px; }
.w32 { width: 32px; }
.tray .two { display: block; text-align: center; font-size: 13.9px; line-height: 22px; padding-top: 3px; }
.lang { width: 43px; }
.clock { width: 89px; }
.notif { width: 46px; }
.edge { width: 1px; margin-left: 13px; background: #666; }
```
